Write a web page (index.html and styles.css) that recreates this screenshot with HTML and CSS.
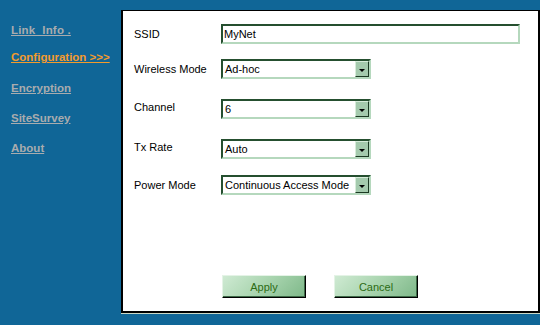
FILE: index.html
```html
<!DOCTYPE html>
<html>
<head>
<meta charset="utf-8">
<link rel="stylesheet" href="styles.css">
</head>
<body>
<div class="page">
  <nav class="nav">
    <a class="link link-info" href="#">Link&nbsp; Info .</a>
    <a class="link active" href="#">Configuration &gt;&gt;&gt;</a>
    <a class="link" href="#">Encryption</a>
    <a class="link" href="#">SiteSurvey</a>
    <a class="link" href="#">About</a>
  </nav>
  <div class="panel-wrap">
    <div class="panel">
      <div class="row r1">
        <span class="label">SSID</span>
        <div class="field text">MyNet</div>
      </div>
      <div class="row r2">
        <span class="label">Wireless Mode</span>
        <div class="field select"><span class="val">Ad-hoc</span><span class="btn"><span class="arrow"></span></span></div>
      </div>
      <div class="row r3">
        <span class="label up">Channel</span>
        <div class="field select"><span class="val">6</span><span class="btn"><span class="arrow"></span></span></div>
      </div>
      <div class="row r4">
        <span class="label up">Tx Rate</span>
        <div class="field select"><span class="val">Auto</span><span class="btn"><span class="arrow"></span></span></div>
      </div>
      <div class="row r5">
        <span class="label">Power Mode</span>
        <div class="field select"><span class="val">Continuous Access Mode</span><span class="btn"><span class="arrow"></span></span></div>
      </div>
      <div class="actions">
        <button class="button">Apply</button>
        <button class="button">Cancel</button>
      </div>
    </div>
  </div>
</div>
</body>
</html>
```

FILE: styles.css
```css
html, body {
  margin: 0;
  padding: 0;
  background: #106697;
  width: 540px;
  height: 325px;
  overflow: hidden;
  font-family: "Liberation Sans", Arial, sans-serif;
}
.page {
  display: flex;
  align-items: flex-start;
}
.nav {
  width: 123px;
  display: flex;
  flex-direction: column;
  align-items: flex-start;
  padding-left: 11px;
  box-sizing: border-box;
  padding-top: 23px;
}
.link {
  font-size: 11.5px;
  font-weight: bold;
  line-height: 14px;
  height: 14px;
  color: #a9acae;
  text-decoration: underline;
  margin-bottom: 16px;
}
.link-info { margin-bottom: 13px; letter-spacing: 0.2px; }
.link.active { color: #f39b2c; margin-bottom: 17px; }
.panel-wrap {
  margin-top: 10px;
  border-bottom: 1px solid #c9d9c7;
}
.panel {
  width: 404px;
  height: 300px;
  background: #fff;
  border-top: 1px solid #000;
  border-left: 2px solid #000;
  border-right: 2px solid #000;
  border-bottom: 2px solid #000;
  padding-left: 11px;
  display: flex;
  flex-direction: column;
  font-size: 11px;
  color: #000;
}
.row {
  display: flex;
  align-items: center;
  height: 20px;
}
.r1 { margin-top: 13px; }
.r2 { margin-top: 15px; }
.r3 { margin-top: 20px; }
.r4 { margin-top: 20px; }
.r5 { margin-top: 16px; }
.label {
  width: 87px;
  font-size: 11px;
}
.label.up { position: relative; top: -2px; }
.field {
  height: 20px;
  box-sizing: border-box;
  border: 2px solid;
  border-color: #254f2f #b5d8bd #b5d8bd #254f2f;
  background: #fff;
  display: flex;
  align-items: center;
}
.text {
  width: 299px;
  padding-left: 1px;
}
.select {
  width: 150px;
  padding-left: 2px;
  justify-content: space-between;
}
.btn {
  width: 14px;
  height: 16px;
  box-sizing: border-box;
  background: #a4caad;
  border: 1px solid;
  border-color: #d7ecda #1c3a23 #1c3a23 #d7ecda;
  display: flex;
  align-items: center;
  justify-content: center;
}
.arrow {
  width: 0;
  height: 0;
  border-left: 3px solid transparent;
  border-right: 3px solid transparent;
  border-top: 3px solid #000;
  margin-top: 2px;
}
.actions {
  display: flex;
  margin-top: auto;
  margin-bottom: 13px;
  padding-left: 88px;
  gap: 28px;
}
.button {
  width: 84px;
  height: 23px;
  box-sizing: border-box;
  font-family: "Liberation Sans", Arial, sans-serif;
  font-size: 11px;
  color: #2c6b14;
  background: linear-gradient(135deg, #cfead3 0%, #a8d4ae 50%, #7eb889 100%);
  border: 1px solid;
  border-color: #e4f3e6 #000 #000 #e4f3e6;
  box-shadow: inset -1px -1px 0 #3d6a47;
  padding: 0;
}
```
